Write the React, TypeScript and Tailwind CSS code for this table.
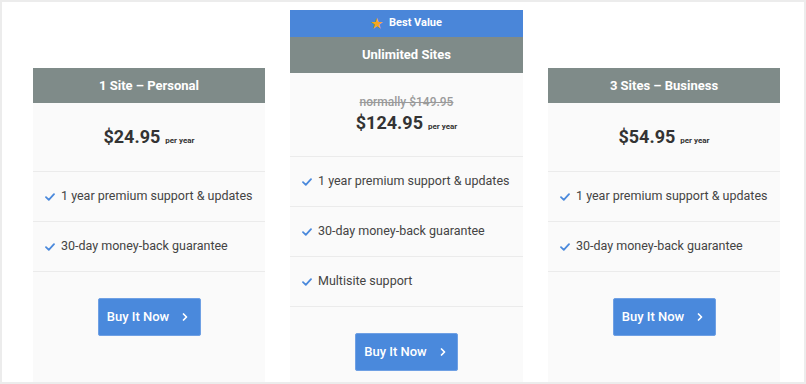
import { ChevronRight } from "lucide-react";

type Plan = {
	name: string;
	price: string;
	was?: string;
	features: string[];
	featured?: boolean;
};

const plans: Plan[] = [
	{
		name: "1 Site – Personal",
		price: "$24.95",
		features: ["1 year premium support & updates", "30-day money-back guarantee"],
	},
	{
		name: "Unlimited Sites",
		price: "$124.95",
		was: "normally $149.95",
		features: [
			"1 year premium support & updates",
			"30-day money-back guarantee",
			"Multisite support",
		],
		featured: true,
	},
	{
		name: "3 Sites – Business",
		price: "$54.95",
		features: ["1 year premium support & updates", "30-day money-back guarantee"],
	},
];

function Check() {
	return (
		<svg width="10" height="8" viewBox="0 0 10 8" className="shrink-0">
			<path
				d="M1 4.2 L3.8 6.8 L9 1.2"
				fill="none"
				stroke="#4a89dc"
				strokeWidth="1.8"
				strokeLinecap="round"
				strokeLinejoin="round"
			/>
		</svg>
	);
}

function PlanCard({ plan }: { plan: Plan }) {
	return (
		<div
			className={`flex flex-col bg-[#fafafa] ${plan.featured ? "mt-[8px] w-[233px]" : "mt-[66px] w-[232px]"}`}
		>
			{plan.featured && (
				<div className="flex h-[27px] items-center justify-center gap-[6px] bg-[#4a86d9] text-[11px] font-bold text-white">
					<span className="text-[13px] leading-none text-[#f5a623]">★</span>
					Best Value
				</div>
			)}
			<div
				className={`flex items-center justify-center bg-[#7f8b89] text-[13px] font-bold text-white ${plan.featured ? "h-[36px]" : "h-[35px]"}`}
			>
				{plan.name}
			</div>
			<div
				className={`flex flex-col items-center justify-center border-b border-[#ebebeb] ${plan.featured ? "h-[84px] pb-[2px]" : "h-[69px]"}`}
			>
				{plan.was && (
					<span className="mb-[1px] text-[12px] font-medium text-[#9a9a9a] line-through">
						{plan.was}
					</span>
				)}
				<div className="flex items-baseline gap-[5px] text-[#333]">
					<span className="text-[18px] font-bold leading-[22px]">{plan.price}</span>
					<span className="text-[8px] font-bold">per year</span>
				</div>
			</div>
			{plan.features.map((f) => (
				<div
					key={f}
					className="flex h-[50px] items-center gap-[6px] whitespace-nowrap border-b border-[#ebebeb] pl-[12px] text-[12.5px] text-[#444]"
				>
					<Check />
					<span>{f}</span>
				</div>
			))}
			<div className="flex justify-center pt-[26px]">
				<button className="flex h-[38px] w-[103px] items-center justify-center gap-[10px] rounded-[2px] border border-[#6fa0e4] bg-[#4a89dc] text-[13px] font-medium text-white">
					Buy It Now
					<ChevronRight size={12} strokeWidth={3.5} />
				</button>
			</div>
		</div>
	);
}

export default function App() {
	return (
		<div
			className="flex h-[384px] w-[806px] gap-[25px] overflow-hidden border-2 border-[#ececec] bg-white pl-[31px]"
			style={{ fontFamily: "Roboto, 'Liberation Sans', sans-serif" }}
		>
			{plans.map((p) => (
				<PlanCard key={p.name} plan={p} />
			))}
		</div>
	);
}
